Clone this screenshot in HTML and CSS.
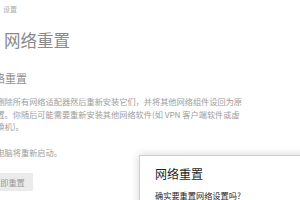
FILE: index.html
```html
<!DOCTYPE html>
<html lang="zh-CN">
<head>
<meta charset="utf-8">
<link rel="stylesheet" href="styles.css">
</head>
<body>
<div class="window">
  <div class="titlebar">设置</div>
  <h1 class="page-title">网络重置</h1>
  <section class="content">
    <h2 class="section-title">网络重置</h2>
    <p class="desc">这将删除所有网络适配器然后重新安装它们，并将其他网络组件设回为原始设置。你随后可能需要重新安装其他网络软件(如 VPN 客户端软件或虚拟交换机)。</p>
    <p class="note">你的电脑将重新启动。</p>
    <button class="reset-btn">立即重置</button>
  </section>
  <div class="dialog">
    <div class="dialog-title">网络重置</div>
    <div class="dialog-text">确实要重置网络设置吗?</div>
  </div>
</div>
</body>
</html>
```
FILE: styles.css
```css
html, body {
  margin: 0;
  padding: 0;
  background: #ffffff;
  overflow: hidden;
}
.window {
  position: relative;
  width: 300px;
  height: 200px;
  overflow: hidden;
  font-family: "Noto Sans CJK SC", "Noto Sans", sans-serif;
  color: #9d9d9d;
}
.titlebar {
  height: 18px;
  line-height: 18px;
  font-size: 7px;
  padding-left: 3px;
  color: #ababab;
}
.page-title {
  margin: 12px 0 0 4px;
  font-size: 16.5px;
  line-height: 20px;
  font-weight: 400;
  color: #8a8a8a;
}
.content {
  margin-left: -20px;
}
.section-title {
  margin: 21px 0 0 3px;
  font-size: 11px;
  line-height: 14px;
  font-weight: 400;
  color: #8e8e8e;
}
.desc {
  margin: 10px 0 0 0;
  width: 266px;
  font-size: 8.2px;
  line-height: 12.5px;
}
.note {
  margin: 13.5px 0 0 0;
  font-size: 8.2px;
  line-height: 12.5px;
}
.reset-btn {
  display: block;
  margin: 14px 0 0 4px;
  height: 18px;
  padding: 0 8px;
  border: none;
  background: #ebebeb;
  color: #9a9a9a;
  font-family: inherit;
  font-size: 8.2px;
}
.dialog {
  position: absolute;
  left: 139px;
  top: 155px;
  width: 200px;
  height: 80px;
  background: #ffffff;
  border: 1px solid #cfcfcf;
  box-shadow: 0 0 8px rgba(0, 0, 0, 0.18);
  padding: 10px 0 0 15px;
  box-sizing: border-box;
  color: #1f1f1f;
}
.dialog-title {
  font-size: 12px;
  line-height: 16px;
}
.dialog-text {
  margin-top: 7px;
  font-size: 8.2px;
  line-height: 12px;
}
```
